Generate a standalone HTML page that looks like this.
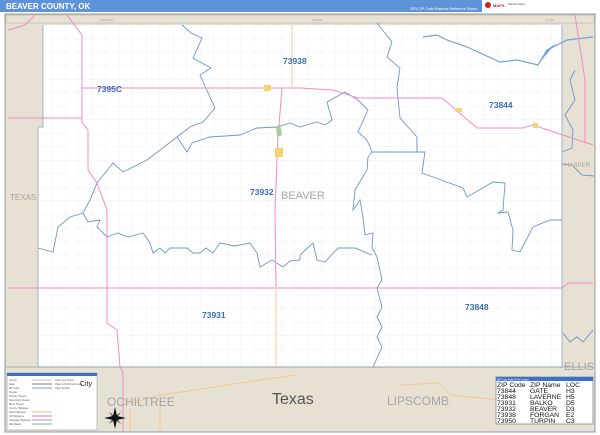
<!DOCTYPE html>
<html><head><meta charset="utf-8"><style>
body{margin:0;width:600px;height:435px;overflow:hidden;background:#fff;font-family:"Liberation Sans",sans-serif}
svg{display:block}
</style></head><body>
<svg width="600" height="435" viewBox="0 0 600 435" xmlns="http://www.w3.org/2000/svg" font-family="Liberation Sans, sans-serif">
<defs>
<pattern id="g" x="38" y="25" width="13.5" height="13.5" patternUnits="userSpaceOnUse">
<path d="M0 0H13.5M0 0V13.5" stroke="#ededf1" stroke-width="0.7" fill="none"/>
</pattern>
</defs>
<rect width="600" height="435" fill="#fff"/>
<rect x="0" y="0" width="600" height="12" fill="#5e92d9"/>
<text x="6" y="9" font-size="8" font-weight="bold" fill="#fff">BEAVER COUNTY, OK</text>
<text x="410" y="10" font-size="3.5" fill="#fff">2020 ZIP Code Business Reference Edition</text>
<rect x="482" y="0" width="118" height="12" fill="#fff"/>
<circle cx="488" cy="5" r="3" fill="#c22"/><text x="493" y="7" font-size="4" fill="#c22" font-weight="bold">MAPS</text>
<text x="508" y="5" font-size="3" fill="#555">Market Maps</text>
<rect x="5" y="14" width="590" height="418" fill="#e6e1d3" stroke="#8f98a8" stroke-width="1"/>
<rect x="6" y="15" width="588" height="8" fill="#e6e1d3" stroke="#a8a8a8" stroke-width="0.5"/>
<text x="100" y="21" font-size="3" fill="#aaa">SEWARD</text>
<text x="312" y="21" font-size="3" fill="#aaa">MEADE</text>
<text x="545" y="21" font-size="3" fill="#aaa">CLARK</text>
<path d="M43 25H562V367H38V127H43Z" fill="#fff"/>
<path d="M43 25H562V367H38V127H43Z" fill="url(#g)"/>
<path d="M43 25V127H38V367H562V25" fill="none" stroke="#8aa4c8" stroke-width="0.8"/>
<line x1="6" y1="367" x2="594" y2="367" stroke="#8f98a8" stroke-width="0.8"/>
<g fill="none" stroke="#6b97cc" stroke-width="0.9">
<path d="M182 25L191 33L202 38L193 58L211 68L200 75L209 95L215 108L203 122L190 127L177 137L147 160L123 172L113 163L97 183L90 200L83 213L70 217L58 227L53 252L38 248"/>
<path d="M177 137L187 152L192 143L210 137L240 135L257 128L277 127L290 123L300 127L317 122L325 125L332 120L327 102L345 92L358 100L368 110L358 132L367 140L372 152L425 152L422 173L463 188L467 197L493 182L505 183L503 210L498 213L508 212L513 230L512 250L520 252L533 227L550 220L562 220"/>
<path d="M377 23L392 42L387 57L400 68L397 87L400 118L417 137L417 152"/>
<path d="M372 152L368 157L367 170L355 190L353 210L360 200L363 217L365 235L373 233L372 247L377 257L382 280L377 288L382 307L377 317L382 327L377 337L382 347L373 367"/>
<path d="M83 213L88 222L100 220L97 227L107 237L118 233L128 237L143 233L150 243L153 253L160 248L165 253L170 248L177 248L187 248L193 253L200 253L206 248L213 253L220 243L235 246L250 243L257 253L260 267L272 260L283 267L290 261L300 260L300 255L313 243L317 260L325 262L338 248L355 248L372 255"/>
<path d="M563 333L570 342L577 337L583 342L593 330"/>
<path d="M562 152L572 148L573 130L565 115L575 100L570 80L575 70"/>
<path d="M562 164L572 165L582 175L594 176"/>
</g>
<path d="M423 37L437 35L447 40L467 47L500 62L517 60L538 65L547 50L567 40L593 37" fill="none" stroke="#6fa3d6" stroke-width="1.2"/>
<path d="M538 65L547 50L556 43L545 56Z" fill="#6fa3d6"/>
<g fill="none" stroke="#f08cc8" stroke-width="1">
<path d="M82 88H300L333 90L358 98H442L477 128H523L533 125L563 135L593 145"/>
<path d="M67 15L82 35V122L88 130V170L97 183L107 210V323L117 330L120 367L123 373V432"/>
<path d="M8 118H82"/>
<path d="M282 88L278 137L277 160L275 210L276 287"/>
<path d="M8 288H562L568 283H593"/>
<path d="M575 15L585 80V142"/>
<path d="M8 30L25 25L35 15"/>
</g>
<g fill="none" stroke="#f4c690" stroke-width="0.9">
<path d="M292 25V87"/><path d="M276 288V367"/>
<path d="M123 405L160 395L195 390L260 380L295 375"/>
<path d="M400 385L440 383L450 395L500 400"/>
<path d="M130 410V430M160 395V430"/>
</g>
<rect x="264" y="85" width="7" height="6" fill="#f5d36a"/>
<rect x="275" y="148" width="8" height="9" fill="#f5d36a"/>
<rect x="456" y="108" width="6" height="4" fill="#f5d36a"/>
<rect x="533" y="123" width="5" height="5" fill="#f5d36a"/>
<path d="M276 127L280 124L282 135L277 137Z" fill="#a8cc90"/>
<g fill="#3b6fb5" font-weight="bold" font-size="8.5">
<text x="283" y="64">73938</text>
<text x="97" y="92">7395C</text>
<text x="489" y="108">73844</text>
<text x="250" y="195">73932</text>
<text x="202" y="318">73931</text>
<text x="465" y="310">73848</text>
</g>
<g fill="#a6a6a6">
<text x="281" y="199" font-size="11">BEAVER</text>
<text x="10" y="200" font-size="8">TEXAS</text>
<text x="565" y="167" font-size="6">HARPER</text>
<text x="564" y="370" font-size="11">ELLIS</text>
<text x="107" y="406" font-size="12">OCHILTREE</text>
<text x="387" y="405" font-size="12">LIPSCOMB</text>
</g>
<text x="272" y="404" font-size="16" fill="#555">Texas</text>
<g transform="translate(115,418)" fill="#111">
<path d="M0 -11L2 -2L11 0L2 2L0 11L-2 2L-11 0L-2 -2Z"/>
<path d="M-6 -6L1 -1L6 6L-1 1Z" opacity=".7"/><path d="M6 -6L1 1L-6 6L-1 -1Z" opacity=".7"/>
</g>
<rect x="7" y="373" width="90" height="57" fill="#fff" stroke="#888" stroke-width="0.5"/>
<rect x="7" y="373" width="90" height="3" fill="#3b6fd0"/>
<g font-size="2.5" fill="#555">
<text x="9" y="381">County</text><text x="9" y="385">State</text><text x="9" y="389">ZIP Code</text>
<text x="9" y="393">Streets</text><text x="9" y="397">Primary Streets</text><text x="9" y="401">Secondary Streets</text>
<text x="9" y="405">Minor Streets</text><text x="9" y="409">County Highways</text><text x="9" y="413">State Highways</text>
<text x="9" y="417">US Highways</text><text x="9" y="421">Interstate Highways</text><text x="9" y="425">Rail Roads</text>
<text x="55" y="381">Cities and Towns</text><text x="55" y="385">Cities 100,000 and more</text><text x="55" y="389">Cities 50,000</text>
</g>
<g stroke-width="1.2">
<line x1="32" y1="380" x2="52" y2="380" stroke="#ccc"/><line x1="32" y1="384" x2="52" y2="384" stroke="#999"/>
<line x1="32" y1="388" x2="52" y2="388" stroke="#8fb4e0"/><line x1="32" y1="412" x2="52" y2="412" stroke="#f4c690"/>
<line x1="32" y1="416" x2="52" y2="416" stroke="#f08cc8"/><line x1="32" y1="420" x2="52" y2="420" stroke="#b6a0e0"/>
<line x1="32" y1="424" x2="52" y2="424" stroke="#8cd08c"/>
</g>
<text x="80" y="386" font-size="7" fill="#222">City</text>
<rect x="496" y="377" width="97" height="47" fill="#fff" stroke="#666" stroke-width="0.6"/>
<rect x="496" y="377" width="97" height="4" fill="#3b6fd0"/>
<text x="497" y="380.5" font-size="2.5" fill="#fff">ZIP Code Index/Grid Locator</text>
<g font-size="6.8" fill="#111">
<text x="497" y="387">ZIP Code</text><text x="530" y="387">ZIP Name</text><text x="566" y="387">LOC</text>
<text x="497" y="393">73844</text><text x="530" y="393">GATE</text><text x="566" y="393">H3</text>
<text x="497" y="399">73848</text><text x="530" y="399">LAVERNE</text><text x="566" y="399">H5</text>
<text x="497" y="405">73931</text><text x="530" y="405">BALKO</text><text x="566" y="405">D5</text>
<text x="497" y="411">73932</text><text x="530" y="411">BEAVER</text><text x="566" y="411">D3</text>
<text x="497" y="417">73938</text><text x="530" y="417">FORGAN</text><text x="566" y="417">E2</text>
<text x="497" y="423">73950</text><text x="530" y="423">TURPIN</text><text x="566" y="423">C3</text>
</g>
</svg>
</body></html>
